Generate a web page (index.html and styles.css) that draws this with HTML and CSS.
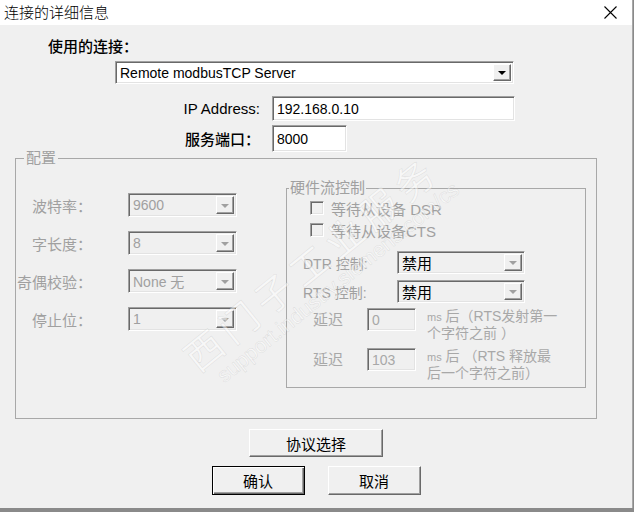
FILE: index.html
```html
<!DOCTYPE html>
<html lang="zh-CN">
<head>
  <meta charset="UTF-8">
  <title>连接的详细信息</title>
  <link rel="stylesheet" href="styles.css">
</head>
<body>
  <div class="window">
    <!-- Title bar -->
    <div class="titlebar">
      <span class="title">连接的详细信息</span>
      <svg class="close" width="13" height="13" viewBox="0 0 13 13">
        <path d="M0.5 0.5 L12.5 12.5 M12.5 0.5 L0.5 12.5" stroke="#000" stroke-width="1.1" fill="none"/>
      </svg>
    </div>

    <div class="content">
      <div class="conn-label">使用的连接：</div>
      <div class="combo combo-main">
        <span>Remote modbusTCP Server</span>
        <span class="drop"></span>
      </div>

      <div class="field-row ip-row">
        <span class="field-label">IP Address:</span>
        <div class="edit edit-ip">192.168.0.10</div>
      </div>
      <div class="field-row port-row">
        <span class="field-label bold">服务端口：</span>
        <div class="edit edit-port">8000</div>
      </div>

      <!-- Serial settings (disabled) -->
      <fieldset class="group config">
        <legend>配置</legend>
        <div class="config-body">
          <div class="serial">
            <div class="serial-row">
              <span class="lbl">波特率：</span>
              <div class="combo combo-small disabled"><span>9600</span><span class="drop"></span></div>
            </div>
            <div class="serial-row">
              <span class="lbl">字长度：</span>
              <div class="combo combo-small disabled"><span>8</span><span class="drop"></span></div>
            </div>
            <div class="serial-row">
              <span class="lbl">奇偶校验：</span>
              <div class="combo combo-small disabled"><span>None 无</span><span class="drop"></span></div>
            </div>
            <div class="serial-row">
              <span class="lbl">停止位：</span>
              <div class="combo combo-small disabled"><span>1</span><span class="drop"></span></div>
            </div>
          </div>

          <fieldset class="group hw">
            <legend>硬件流控制</legend>
            <div class="check-row first">
              <span class="checkbox"></span>
              <span class="check-text">等待从设备 DSR</span>
            </div>
            <div class="check-row">
              <span class="checkbox"></span>
              <span class="check-text">等待从设备CTS</span>
            </div>
            <div class="ctl-row dtr">
              <span class="ctl-label">DTR 控制:</span>
              <div class="combo combo-ctl"><span>禁用</span><span class="drop grey"></span></div>
            </div>
            <div class="ctl-row rts">
              <span class="ctl-label">RTS 控制:</span>
              <div class="combo combo-ctl"><span>禁用</span><span class="drop grey"></span></div>
            </div>
            <div class="delay-row">
              <span class="delay-label">延迟</span>
              <div class="edit edit-delay">0</div>
              <div class="delay-text"><span class="ms">ms</span> 后（RTS发射第一<br>个字符之前 ）</div>
            </div>
            <div class="delay-row second">
              <span class="delay-label">延迟</span>
              <div class="edit edit-delay">103</div>
              <div class="delay-text"><span class="ms">ms</span> 后 （RTS 释放最<br>后一个字符之前）</div>
            </div>
          </fieldset>
        </div>
      </fieldset>

      <div class="buttons">
        <button class="btn btn-wide">协议选择</button>
        <div class="btn-row">
          <button class="btn default">确认</button>
          <button class="btn">取消</button>
        </div>
      </div>
    </div>

    <!-- Watermark -->
    <div class="watermark">
      <div class="wm-cn">西门子工业服务</div>
      <div class="wm-url">support.industry.siemens.com/cs</div>
    </div>
  </div>
</body>
</html>
```

FILE: styles.css
```css
* {
  box-sizing: border-box;
}

body {
  margin: 0;
  background-color: #8a8a8a;
  font-family: 'Liberation Sans', 'Noto Sans CJK SC', sans-serif;
  font-size: 14px;
  color: #000;
  overflow: hidden;
}

.window {
  position: relative;
  width: 633px;
  height: 508px;
  background-color: #f0f0f0;
  border-right: 1px solid #a8a8a8;
  overflow: hidden;
}

.titlebar {
  height: 25px;
  background-color: #fff;
  display: flex;
  align-items: center;
  justify-content: space-between;
  padding: 0 15px 0 4px;
}

.title {
  font-family: 'Noto Sans CJK SC', sans-serif;
  font-size: 15px;
  line-height: 18px;
  margin-top: -2px;
  font-weight: 300;
}

.content {
  padding-top: 13px;
}

.conn-label {
  margin-left: 48px;
  font-size: 15px;
  line-height: 18px;
  font-weight: 500;
}

.bold {
  font-weight: 500;
}

/* sunken controls */
.combo,
.edit,
.checkbox {
  border: 1px solid;
  border-color: #a0a0a0 #fff #fff #a0a0a0;
  box-shadow: inset 1px 1px #696969, inset -1px -1px #e3e3e3;
}

.combo {
  position: relative;
  display: flex;
  align-items: center;
  padding-left: 4px;
  background-color: #f0f0f0;
  white-space: nowrap;
}

.combo-main {
  margin: 5px 0 0 115px;
  width: 399px;
  height: 23px;
  background-color: #fff;
}

.drop {
  position: absolute;
  right: 2px;
  top: 2px;
  bottom: 2px;
  width: 18px;
  background-color: #f0f0f0;
  border: 1px solid;
  border-color: #fff #696969 #696969 #fff;
  box-shadow: inset -1px -1px #a0a0a0;
  display: flex;
  align-items: center;
  justify-content: center;
}

.drop::after {
  content: "";
  border-left: 4px solid transparent;
  border-right: 4px solid transparent;
  border-top: 4px solid #000;
  margin-top: 1px;
}

.disabled .drop::after,
.drop.grey::after {
  border-top-color: #a0a0a0;
}

.field-row {
  display: flex;
  align-items: center;
}

.field-label {
  width: 260px;
  text-align: right;
  font-size: 15px;
  margin-right: 12px;
}

.ip-row {
  margin-top: 12px;
}

.port-row {
  margin-top: 4px;
}

.edit {
  display: flex;
  align-items: center;
  padding-left: 4px;
  background-color: #fff;
}

.edit-ip {
  width: 243px;
  height: 25px;
}

.edit-port {
  width: 75px;
  height: 27px;
}

/* group boxes */
.group {
  margin: 0;
  padding: 0;
  min-width: 0;
  border: 1px solid #a8a8a8;
}

.group legend {
  padding: 0 2px;
  font-size: 15px;
  line-height: 16px;
  color: #a0a0a0;
}

.config {
  margin: -2px 0 0 15px;
  width: 582px;
  height: 269px;
}

.config legend {
  margin-left: 8px;
}

.config-body {
  display: flex;
  align-items: flex-start;
}

.serial {
  margin-top: 27px;
  display: flex;
  flex-direction: column;
  gap: 14px;
}

.serial-row {
  display: flex;
  align-items: center;
}

.serial-row .lbl {
  width: 76px;
  text-align: right;
  font-size: 15px;
  color: #a0a0a0;
}

.combo-small {
  margin-left: 36px;
  width: 109px;
  height: 24px;
  color: #a0a0a0;
}

.hw {
  margin: 14px 0 0 49px;
  width: 300px;
  height: 208px;
}

.hw legend {
  margin-left: 2px;
  padding: 0 1px;
}

.check-row {
  display: flex;
  align-items: center;
  height: 22px;
  padding-left: 23px;
}

.check-row.first {
  margin-top: 1px;
}

.checkbox {
  width: 14px;
  height: 14px;
  background-color: #f0f0f0;
}

.check-text {
  margin-left: 7px;
  font-size: 15px;
  color: #a0a0a0;
}

.ctl-row {
  display: flex;
  align-items: center;
  padding-left: 16px;
}

.ctl-row.dtr {
  margin-top: 10px;
}

.ctl-row.rts {
  margin-top: 6px;
}

.ctl-label {
  width: 94px;
  font-size: 14px;
  color: #a0a0a0;
}

.combo-ctl {
  width: 128px;
  height: 23px;
  font-size: 15px;
}

.delay-row {
  display: flex;
  align-items: flex-start;
  padding-left: 26px;
  margin-top: 5px;
  color: #a8a8a8;
}

.delay-row.second {
  margin-top: 7px;
}

.delay-label {
  width: 54px;
  font-size: 15px;
  line-height: 23px;
}

.edit-delay {
  width: 49px;
  height: 23px;
  background-color: #f0f0f0;
}

.delay-text {
  margin-left: 11px;
  font-size: 14px;
  line-height: 16px;
}

.ms {
  font-size: 11px;
}

/* buttons */
.buttons {
  display: flex;
  flex-direction: column;
  align-items: center;
  width: 632px;
  margin-top: 10px;
}

.btn {
  height: 28px;
  font-family: 'Noto Sans CJK SC', sans-serif;
  font-size: 15px;
  color: #000;
  background-color: #f0f0f0;
  border: 1px solid;
  border-color: #fff #696969 #696969 #fff;
  box-shadow: inset -1px -1px #a0a0a0;
  padding: 0;
}

.btn-wide {
  width: 134px;
}

.btn-row {
  display: flex;
  gap: 23px;
  margin-top: 9px;
}

.btn-row .btn {
  width: 93px;
  height: 29px;
}

.btn.default {
  border-color: #000;
  box-shadow: inset 1px 1px #fff, inset -1px -1px #696969, inset -2px -2px #a0a0a0;
}

/* watermark over the dialog */
.watermark {
  position: absolute;
  left: 175px;
  top: 345px;
  transform-origin: 0 0;
  transform: rotate(-39deg);
  pointer-events: none;
  white-space: nowrap;
  color: rgba(255, 255, 255, 0.5);
  -webkit-text-stroke: 0.6px rgba(150, 150, 150, 0.22);
}

.wm-cn {
  font-family: 'Noto Sans CJK SC', sans-serif;
  font-size: 38px;
  line-height: 42px;
  letter-spacing: 7px;
}

.wm-url {
  font-size: 21px;
  line-height: 24px;
  margin-left: 14px;
}
```
